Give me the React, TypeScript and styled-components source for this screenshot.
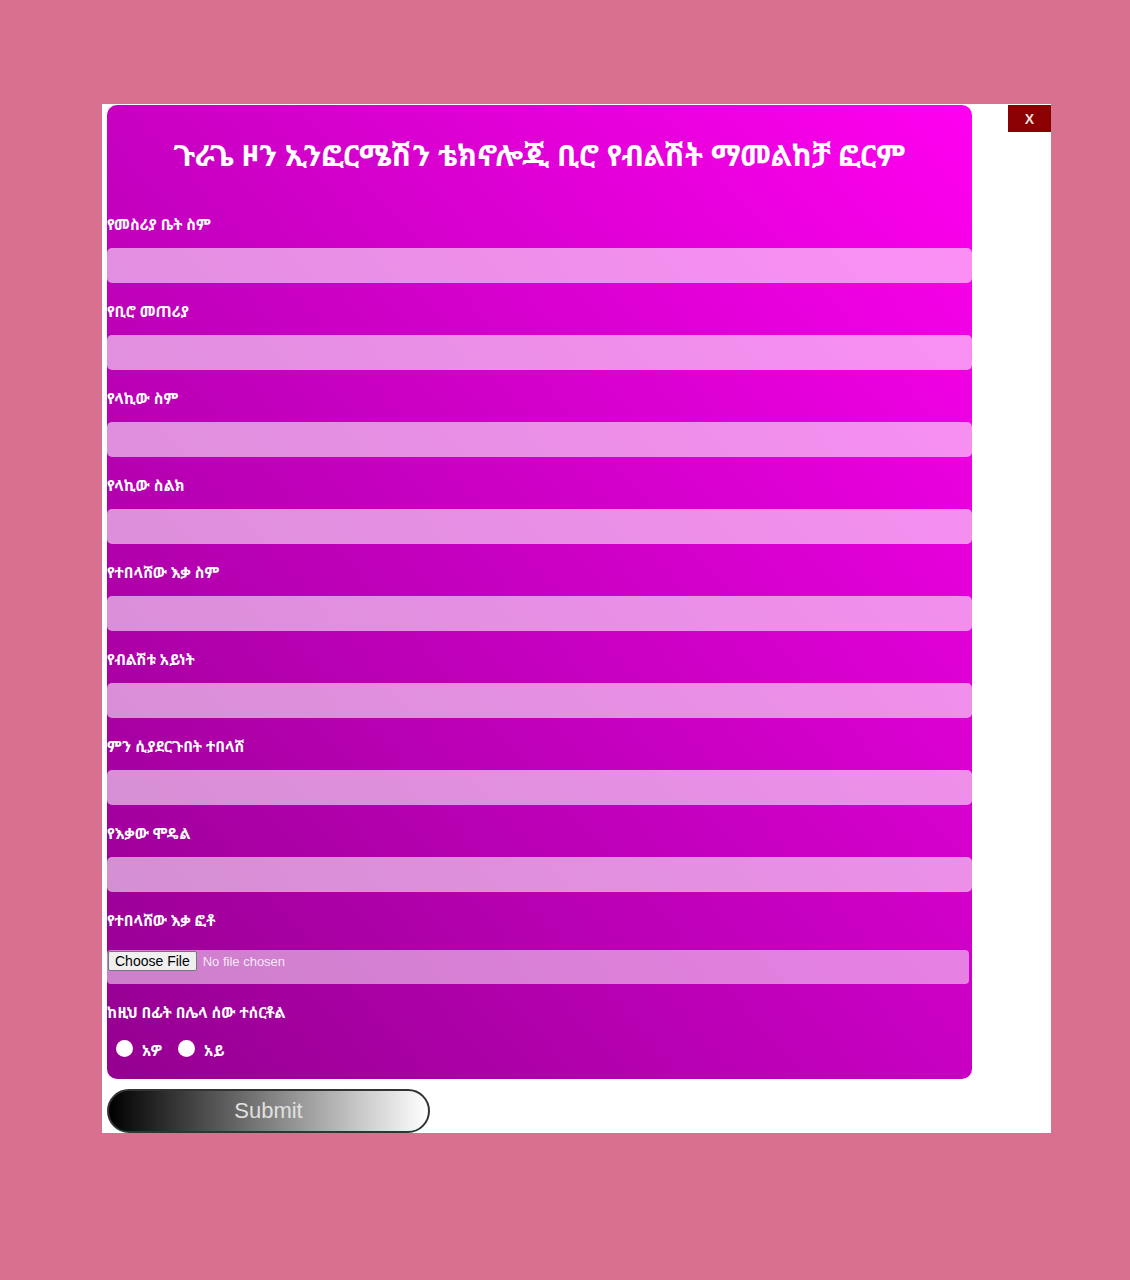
import React from "react";
import styled, { createGlobalStyle } from "styled-components";

const Global = createGlobalStyle`
  html, body { margin: 0; padding: 0; }
  body {
    background: #d87090;
    font-family: "Noto Sans Ethiopic", "Abyssinica SIL", "DejaVu Sans", "Noto Sans", sans-serif;
    min-height: 1280px;
  }
`;

const Panel = styled.div`
  margin: 104px 0 0 102px;
  width: 949px;
  background: #ffffff;
  display: flex;
  justify-content: space-between;
  align-items: flex-start;
  padding: 1px 0 0 5px;
  box-sizing: border-box;
`;

const Column = styled.div`
  width: 865px;
  display: flex;
  flex-direction: column;
  align-items: flex-start;
`;

const Card = styled.form`
  width: 865px;
  box-sizing: border-box;
  border-radius: 10px;
  background: linear-gradient(to top right, #940090, #c800c2 50%, #ff00f0);
  padding: 30px 0 19px 0;
  display: flex;
  flex-direction: column;
`;

const Title = styled.h2`
  margin: 0 0 39px 0;
  text-align: center;
  color: #ffffff;
  font-size: 29.5px;
  line-height: 40px;
  font-weight: bold;
`;

const Field = styled.div<{ $last?: boolean }>`
  display: flex;
  flex-direction: column;
  margin-bottom: ${(p) => (p.$last ? "0" : "18px")};
`;

const Label = styled.label`
  display: block;
  color: #ffffff;
  font-size: 15px;
  font-weight: bold;
  line-height: 20px;
  margin: 0 0 14px 0;
  white-space: nowrap;
`;

const TextInput = styled.input`
  height: 35px;
  width: 100%;
  box-sizing: border-box;
  border: none;
  border-radius: 5px;
  background: rgba(255, 255, 255, 0.56);
  outline: none;
  padding: 0 8px;
`;

const FileInput = styled.input`
  height: 34px;
  width: 862px;
  box-sizing: border-box;
  margin-top: 6px;
  border: none;
  border-radius: 4px;
  background: rgba(255, 255, 255, 0.5);
  color: rgba(255, 255, 255, 0.85);
  font-family: "Liberation Sans", Arial, sans-serif;
  font-size: 13px;
  padding: 0 0 14px 1px;
  &::file-selector-button {
    font-family: "Liberation Sans", Arial, sans-serif;
    font-size: 14px;
    color: #000;
    background: #efefef;
    border: 1px solid #767676;
    border-radius: 2px;
    padding: 0 6px;
    margin: 1px 6px 0 0;
    height: 20px;
  }
`;

const RadioRow = styled.div`
  display: flex;
  align-items: center;
  padding-left: 9px;
  margin-top: 0;
  height: 24px;
`;

const Radio = styled.span`
  width: 17px;
  height: 17px;
  border-radius: 50%;
  background: #ffffff;
  display: inline-block;
  margin-right: 9px;
`;

const RadioText = styled.span`
  color: #ffffff;
  font-size: 15px;
  font-weight: bold;
  margin-right: 16px;
  line-height: 20px;
  padding-top: 4px;
`;

const Submit = styled.button`
  margin-top: 10px;
  width: 323px;
  height: 44px;
  border-radius: 22px;
  border: 2px solid #333;
  background: linear-gradient(to right, #000000, #ffffff);
  color: #e0e0e0;
  font-family: "Liberation Sans", Arial, sans-serif;
  font-size: 22px;
  cursor: pointer;
`;

const Close = styled.button`
  width: 43px;
  height: 27px;
  background: #8b0000;
  color: #f2dede;
  border: none;
  font-family: "Liberation Sans", Arial, sans-serif;
  font-size: 14px;
  font-weight: bold;
  padding: 0;
`;

const fields = [
  "የመስሪያ ቤት ስም",
  "የቢሮ መጠሪያ",
  "የላኪው ስም",
  "የላኪው ስልክ",
  "የተበላሸው እቃ ስም",
  "የብልሽቱ አይነት",
  "ምን ሲያደርጉበት ተበላሸ",
  "የእቃው ሞዴል",
];

export default function App() {
  return (
    <>
      <Global />
      <Panel>
        <Column>
          <Card onSubmit={(e) => e.preventDefault()}>
            <Title>ጉራጌ ዞን ኢንፎርሜሽን ቴክኖሎጂ ቢሮ የብልሽት ማመልከቻ ፎርም</Title>
            {fields.map((f) => (
              <Field key={f}>
                <Label>{f}</Label>
                <TextInput type="text" />
              </Field>
            ))}
            <Field>
              <Label>የተበላሸው እቃ ፎቶ</Label>
              <FileInput type="file" />
            </Field>
            <Field $last>
              <Label>ከዚህ በፊት በሌላ ሰው ተሰርቶል</Label>
              <RadioRow>
                <Radio />
                <RadioText>አዎ</RadioText>
                <Radio />
                <RadioText>አይ</RadioText>
              </RadioRow>
            </Field>
          </Card>
          <Submit type="button">Submit</Submit>
        </Column>
        <Close type="button">X</Close>
      </Panel>
    </>
  );
}
